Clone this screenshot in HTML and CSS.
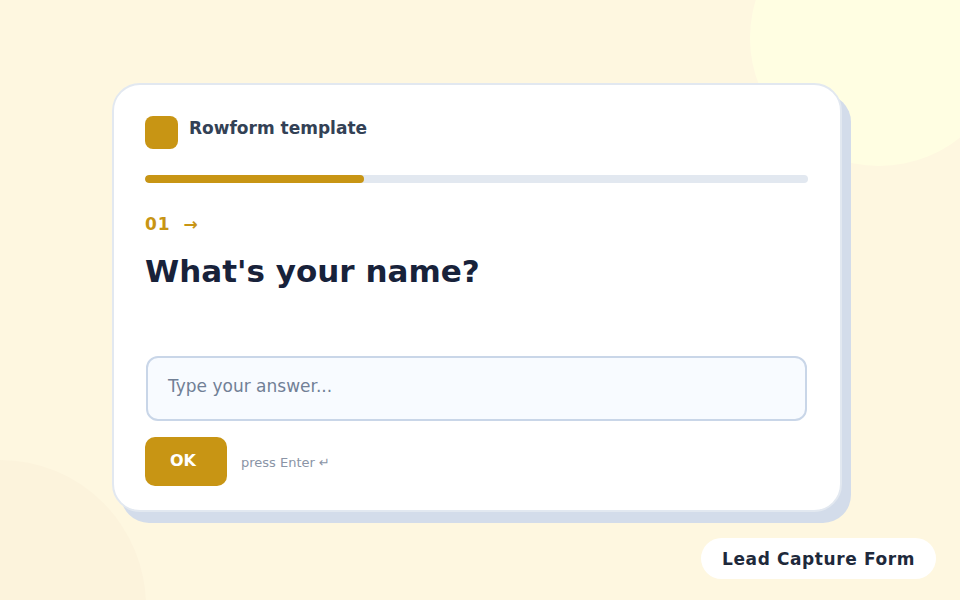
FILE: index.html
```html
<!DOCTYPE html>
<html>
<head>
<meta charset="utf-8">
<link rel="stylesheet" href="styles.css">
</head>
<body>
<div class="page">
  <div class="blob blob-tr"></div>
  <div class="blob blob-bl"></div>
  <main class="stage">
    <section class="card">
      <header class="brand">
        <div class="logo"></div>
        <div class="brand-name">Rowform template</div>
      </header>
      <div class="progress"><div class="progress-fill" style="width:33%"></div></div>
      <div class="qnum">01 <span class="arrow">→</span></div>
      <h1 class="question">What's your name?</h1>
      <div class="answer">Type your answer...</div>
      <div class="actions">
        <div class="ok">OK</div>
        <div class="hint">press Enter ↵</div>
      </div>
    </section>
  </main>
  <div class="tag">Lead Capture Form</div>
</div>
</body>
</html>
```
FILE: styles.css
```css
html, body {
  margin: 0;
  padding: 0;
  overflow: hidden;
}
body {
  font-family: "DejaVu Sans", "Liberation Sans", sans-serif;
}
.page {
  width: 960px;
  height: 600px;
  background: #fef7e0;
  position: relative;
  overflow: hidden;
}
.blob {
  position: absolute;
  border-radius: 50%;
}
.blob-tr {
  left: 750px;
  top: -90px;
  width: 258px;
  height: 256px;
  background: #fffee2;
}
.blob-bl {
  left: -146px;
  top: 460px;
  width: 292px;
  height: 292px;
  background: #fcf3dc;
}
.stage {
  position: relative;
  padding: 83px 0 0 112px;
}
.card {
  width: 664px;
  height: 394px;
  padding: 31px 31px 0 31px;
  background: #ffffff;
  border: 2px solid #e2e8f0;
  border-radius: 28px;
  box-shadow: 9px 11px 0 0 #d3dcea;
  display: flex;
  flex-direction: column;
}
.brand {
  display: flex;
  align-items: center;
  gap: 11px;
  height: 33px;
}
.logo {
  width: 33px;
  height: 33px;
  border-radius: 8px;
  background: #c89514;
}
.brand-name {
  font-size: 17px;
  font-weight: bold;
  color: #334155;
  margin-top: -10px;
}
.progress {
  margin-top: 26px;
  margin-right: 1px;
  height: 8px;
  border-radius: 4px;
  background: #e2e8f0;
  overflow: hidden;
}
.progress-fill {
  height: 100%;
  border-radius: 4px;
  background: #c89514;
}
.qnum {
  margin-top: 31px;
  font-size: 17px;
  line-height: 20px;
  font-weight: bold;
  color: #c89514;
  letter-spacing: 1px;
}
.arrow {
  margin-left: 6px;
}
.question {
  margin: 17px 0 0 0;
  font-size: 31px;
  line-height: 40px;
  font-weight: bold;
  color: #18223a;
  letter-spacing: 0;
}
.answer {
  margin-top: 65px;
  height: 56px;
  border: 2px solid #c9d6e8;
  border-radius: 12px;
  background: #f8fbff;
  box-sizing: content-box;
  padding: 0 20px 5px 20px;
  display: flex;
  align-items: center;
  font-size: 17px;
  color: #718096;
  margin-left: 1px;
  margin-right: 2px;
}
.actions {
  margin-top: 16px;
  display: flex;
  align-items: center;
  gap: 14px;
}
.ok {
  width: 82px;
  height: 49px;
  border-radius: 10px;
  background: #c89514;
  color: #ffffff;
  font-size: 16px;
  font-weight: bold;
  display: flex;
  align-items: center;
  justify-content: center;
  padding-bottom: 2px;
  box-sizing: border-box;
  padding-right: 6px;
}
.hint {
  font-size: 13px;
  color: #8a94a6;
  margin-top: 2px;
}
.tag {
  position: absolute;
  left: 701px;
  top: 538px;
  width: 235px;
  height: 41px;
  border-radius: 21px;
  background: #ffffff;
  color: #1e293b;
  font-size: 17px;
  font-weight: bold;
  display: flex;
  align-items: center;
  justify-content: center;
  letter-spacing: 0.6px;
}
```
